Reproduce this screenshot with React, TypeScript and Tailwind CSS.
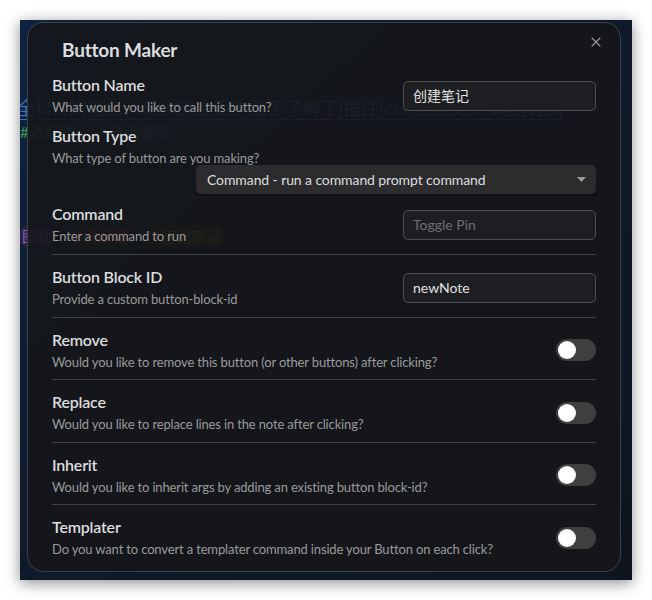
import { X } from 'lucide-react'

const font = { fontFamily: '"Lato", "Noto Sans CJK SC", sans-serif' }

function Toggle() {
  return (
    <div className="w-[40px] h-[22px] rounded-full bg-[#3f3f3f] flex items-center px-[2px] shrink-0">
      <div className="w-[18px] h-[18px] rounded-full bg-white" />
    </div>
  )
}

function Info({ title, desc }: { title: string; desc: string }) {
  return (
    <div className="flex flex-col">
      <div className="text-[16px] leading-[20px] font-semibold tracking-[-0.2px] text-[#dcddde]">{title}</div>
      <div className="text-[13px] leading-[18px] mt-[3px] tracking-[-0.15px] text-[#9a9a9a]">{desc}</div>
    </div>
  )
}

function TextInput({ value, placeholder }: { value?: string; placeholder?: string }) {
  return (
    <div className="w-[193px] h-[30px] rounded-[5px] border border-[#4e4e4e] bg-[#1d1e21] flex items-center px-[9px] text-[14px] shrink-0">
      {value ? (
        <span className="text-[#e2e2e2]">{value}</span>
      ) : (
        <span className="text-[#6f6f6f]">{placeholder}</span>
      )}
    </div>
  )
}

const toggles = [
  { title: 'Remove', desc: 'Would you like to remove this button (or other buttons) after clicking?' },
  { title: 'Replace', desc: 'Would you like to replace lines in the note after clicking?' },
  { title: 'Inherit', desc: 'Would you like to inherit args by adding an existing button block-id?' },
  { title: 'Templater', desc: 'Do you want to convert a templater command inside your Button on each click?' },
]

export default function App() {
  return (
    <div className="w-[652px] h-[600px] bg-white p-[20px]" style={font}>
      <div className="relative w-[612px] h-[560px] overflow-hidden bg-gradient-to-br from-[#0d2340] via-[#0e1a2a] to-[#0e151e] shadow-[0_3px_14px_rgba(0,0,0,0.45)]">
        {/* page underneath the modal */}
        <div className="flex flex-col">
          <div className="mt-[76px] ml-[-3px] whitespace-nowrap text-[18px] leading-[24px] text-[#3a73b8] underline underline-offset-4">
            全科IT的笔化，现小的主页中贴子了解下|插件|css|视频文件-网易订阅
          </div>
          <div className="flex items-center gap-[20px] mt-[1px] text-[15px] leading-[22px]">
            <span className="text-[#3a9a52]">#适配器</span>
            <span className="px-[6px] rounded-full bg-[#1d2b3c] text-[#4a70a0]">#节点编程</span>
          </div>
          <div className="flex items-center gap-[12px] mt-[82px] ml-[-2px] text-[15px] leading-[22px]">
            <span className="px-[4px] rounded-full bg-[#2a2340] text-[#8c60c0]">图性</span>
            <span className="px-[6px] rounded-full bg-[#3a1f24] text-[#b0444b]">#适配器</span>
            <span className="px-[6px] rounded-full bg-[#35301a] text-[#a68d2a]">#速记笔记</span>
          </div>
        </div>

        {/* modal */}
        <div className="absolute left-[7px] top-[2px] w-[594px] h-[550px] rounded-[16px] border border-[#3d3f44] bg-[#15161a]/[0.9] pt-[15px] px-[24px]">
          <X className="absolute right-[16px] top-[11px] w-[16px] h-[16px] text-[#9b9b9b]" strokeWidth={1.6} />
          <h1 className="pl-[10px] text-[19px] leading-[24px] font-bold tracking-[-0.2px] text-[#dcddde]">Button Maker</h1>

          <div className="mt-[13px] flex items-center justify-between">
            <Info title="Button Name" desc="What would you like to call this button?" />
            <TextInput value="创建笔记" />
          </div>

          <div className="mt-[10px]">
            <Info title="Button Type" desc="What type of button are you making?" />
            <div className="flex justify-end mt-[-2px]">
              <div className="w-[400px] h-[29px] rounded-[5px] bg-[#2c2c2e] shadow-[0_1px_2px_rgba(0,0,0,0.5)] flex items-center justify-between pl-[11px] pr-[10px] text-[14px] tracking-[-0.1px] text-[#dcddde]">
                <span>Command - run a command prompt command</span>
                <svg width="9" height="5" viewBox="0 0 9 5"><path d="M0 0 L9 0 L4.5 5 Z" fill="#9a9a9a" /></svg>
              </div>
            </div>
          </div>

          <div className="pt-[10px] pb-[9px] border-b border-[#3f4044] flex items-center justify-between">
            <Info title="Command" desc="Enter a command to run" />
            <TextInput placeholder="Toggle Pin" />
          </div>

          <div className="pt-[12px] pb-[8.5px] border-b border-[#3f4044] flex items-center justify-between">
            <Info title="Button Block ID" desc="Provide a custom button-block-id" />
            <TextInput value="newNote" />
          </div>

          {toggles.map((t, i) => (
            <div
              key={t.title}
              className={`pt-[12px] pb-[8.5px] flex items-center justify-between ${i < toggles.length - 1 ? 'border-b border-[#3f4044]' : ''}`}
            >
              <Info title={t.title} desc={t.desc} />
              <Toggle />
            </div>
          ))}
        </div>
      </div>
    </div>
  )
}
